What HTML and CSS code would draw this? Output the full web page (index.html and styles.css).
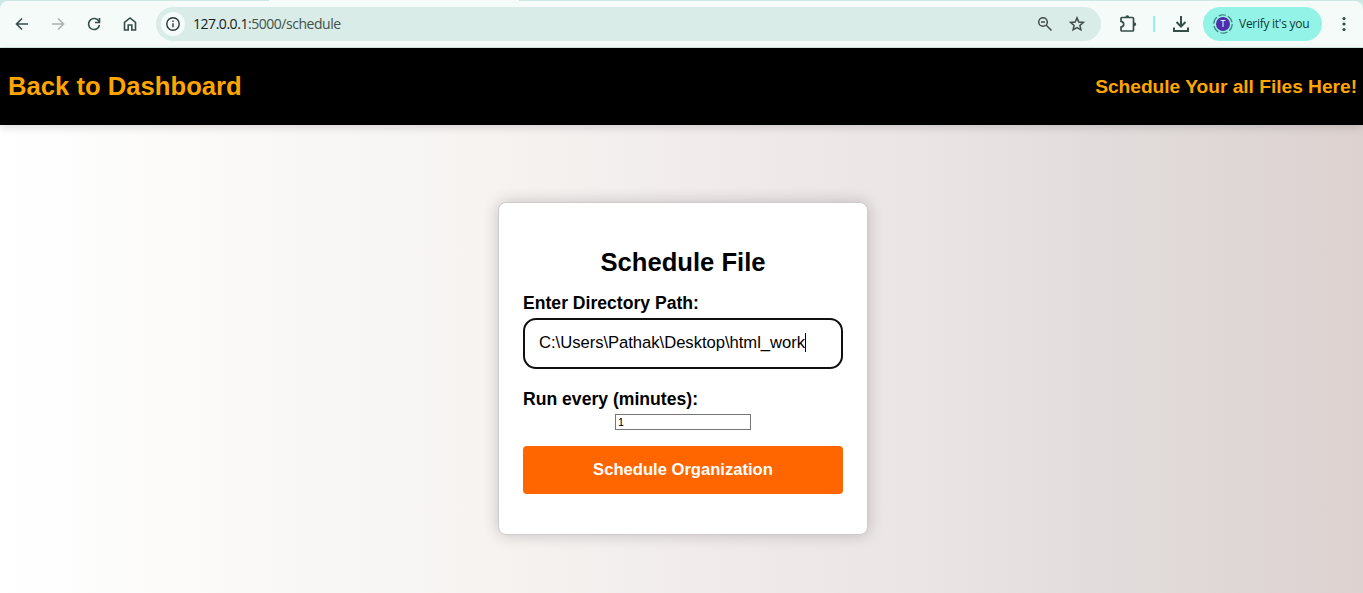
FILE: index.html
```
<!DOCTYPE html>
<html lang="en">
<head>
<meta charset="utf-8">
<title>Schedule File</title>
<link rel="stylesheet" href="styles.css">
</head>
<body>
<div class="browser">
  <div class="tabstrip"><span class="active-tab"></span></div>
  <div class="toolbar">
    <div class="nav">
      <svg viewBox="0 0 16 16"><path d="M14 8H3M8 2.5L2.5 8L8 13.500"/></svg>
      <svg class="muted" viewBox="0 0 16 16"><path d="M2 8H13M8 2.500L13.500 8L8 13.500"/></svg>
      <svg viewBox="0 0 16 16"><path d="M13 5.500A5.500 5.500 0 1 0 13.500 9M13.500 2V6.500H9"/></svg>
      <svg viewBox="0 0 16 16"><path d="M2.500 14V6.500L8 2L13.500 6.500V14H9.800V9H6.200V14Z"/></svg>
    </div>
    <div class="address">
      <span class="info"><svg viewBox="0 0 16 16"><circle cx="8" cy="8" r="6.200"/><path d="M8 7.200V11.200M8 4.600V6"/></svg></span>
      <span class="url"><b>127.0.0.1</b>:5000/schedule</span>
      <svg class="zoom" viewBox="0 0 16 16"><circle cx="6" cy="6" r="4.300"/><path d="M9.300 9.300L14.500 14.500M4 6H8"/></svg>
      <svg class="star" viewBox="0 0 16 16"><path d="M8 1.900L9.800 6L14.300 6.400L10.900 9.400L11.900 13.800L8 11.500L4.100 13.800L5.100 9.400L1.700 6.400L6.200 6Z"/></svg>
    </div>
    <svg class="puzzle" viewBox="0 0 18 18"><path d="M3 2.500H13.500Q14.500 2.500 14.500 3.500V15Q14.500 16 13.500 16H3Q2 16 2 15V12.200Q4.700 11.700 4.700 9.300T2 6.400V3.500Q2 2.500 3 2.500Z"/><path class="solid" d="M6.300 2.500A2 2.300 0 0 1 10.300 2.500ZM14.500 7.200A2.700 2 0 0 1 14.500 11.200Z"/></svg>
    <span class="divider"></span>
    <svg class="download" viewBox="0 0 18 18"><path d="M9 1V11M4.500 7L9 11.500L13.500 7M2 12.500V16H16V12.500"/></svg>
    <div class="profile">
      <span class="avatar"><svg viewBox="0 0 20 20"><circle cx="10" cy="10" r="9.200"/></svg><i>T</i></span>
      <span class="verify">Verify it's you</span>
    </div>
    <svg class="menu" viewBox="0 0 4 16"><circle cx="2" cy="2.500" r="1.600"/><circle cx="2" cy="8" r="1.600"/><circle cx="2" cy="13.500" r="1.600"/></svg>
  </div>
</div>
<header class="header">
  <a class="back">Back to Dashboard</a>
  <span class="tagline">Schedule Your all Files Here!</span>
</header>
<main class="page">
  <form class="card">
    <h1>Schedule File</h1>
    <label>Enter Directory Path:</label>
    <div class="path">C:\Users\Pathak\Desktop\html_work<span class="caret"></span></div>
    <label class="run">Run every (minutes):</label>
    <div class="minutes">1</div>
    <button type="button">Schedule Organization</button>
  </form>
</main>
</body>
</html>
```
FILE: styles.css
```
* { box-sizing: border-box; }
body { margin: 0; height: 593px; overflow: hidden; display: flex; flex-direction: column; font-family: "Liberation Sans", Arial, sans-serif; }
svg { display: block; fill: none; stroke: #344e49; stroke-width: 1.6; flex: none; }

.browser { height: 48px; flex: none; background: #cce8e2; border-bottom: 1px solid #d2e8e3; }
.tabstrip { height: 1px; display: flex; }
.active-tab { width: 250px; margin-left: 269px; background: #f4fbf9; }
.toolbar { height: 46px; display: flex; align-items: center; background: #f4fbf9; border-radius: 8px 8px 0 0; }
.nav { display: flex; gap: 20px; padding-left: 14px; width: 156px; flex: none; }
.nav svg { width: 16px; height: 16px; }
.nav .muted { stroke: #a9b3b0; }
.address { width: 945px; height: 34px; flex: none; display: flex; align-items: center; padding-left: 5px; background: #d9ece7; border-radius: 17px; }
.info { width: 24px; height: 24px; border-radius: 50%; background: #f4fbf9; display: flex; align-items: center; justify-content: center; }
.info svg { width: 16px; height: 16px; stroke: #2c3735; stroke-width: 1.4; }
.url { margin-left: 8px; width: 844px; font: 14px/18px "Open Sans", "Noto Sans", sans-serif; letter-spacing: -.46px; color: #43504d; white-space: nowrap; }
.url b { font-weight: 400; color: #17201e; }
.zoom, .star { width: 16px; height: 16px; stroke: #414c49; stroke-width: 1.5; }
.star { margin-left: 16px; }
.puzzle { width: 18px; height: 18px; margin-left: 18px; stroke-width: 1.7; }
.puzzle .solid { fill: #344e49; stroke: none; }
.divider { width: 2px; height: 16px; margin-left: 16px; background: #93f3e6; }
.download { width: 18px; height: 18px; margin-left: 17px; stroke-width: 2; }
.profile { width: 119px; height: 34px; flex: none; margin-left: 13px; padding-left: 10px; border-radius: 17px; background: #93f3e6; display: flex; align-items: center; }
.avatar { width: 20px; height: 20px; display: grid; place-items: center; }
.avatar > * { grid-area: 1 / 1; }
.avatar svg { width: 20px; height: 20px; stroke: #3c8880; stroke-width: 1.2; stroke-dasharray: 7.500 2.130; }
.avatar i { width: 14px; height: 14px; border-radius: 50%; background: #512da8; color: #fff; font: 9px/14px Roboto, sans-serif; text-align: center; }
.verify { margin-left: 6px; font: 12px/16px "Open Sans", "Noto Sans", sans-serif; letter-spacing: -.27px; color: #123a34; white-space: nowrap; }
.menu { width: 4px; height: 16px; margin-left: 20px; fill: #344e49; stroke: none; }

.header { height: 77px; flex: none; padding: 0 6px 0 8px; display: flex; align-items: center; justify-content: space-between; background: #000; color: #ffa500; font-weight: 700; box-shadow: 0 3px 8px rgba(0, 0, 0, .13); z-index: 1; }
.back { font-size: 25.6px; letter-spacing: .03px; }
.tagline { font-size: 19.2px; letter-spacing: -.03px; }

.page { flex: 1; padding-top: 77px; background: linear-gradient(to right, #fff, #f6f3f1 36%, #ebe5e5 67%, #e1dcdb 82%, #ddd2d0); }
.card { width: 370px; height: 333px; margin-left: 498px; padding: 43px 24px 0; border: 1px solid #ccc; border-radius: 8px; background: #fff; box-shadow: 0 0 16px rgba(0, 0, 0, .2); }
h1 { margin: 0 0 15px; font-size: 25.6px; line-height: 32px; text-align: center; }
label { display: block; font-size: 17.6px; font-weight: 700; line-height: 20px; }
.path { height: 51px; margin-top: 5px; padding: 0 14px 2px; display: flex; align-items: center; border: 2px solid #101010; border-radius: 13px; font-size: 16.64px; letter-spacing: -.03px; white-space: nowrap; }
.caret { width: 1px; height: 19px; background: #000; }
.run { margin-top: 20px; }
.minutes { width: 136px; height: 16px; margin: 5px auto 16px; padding-left: 2px; border: 1px solid #767676; font-size: 10.667px; line-height: 14px; }
button { display: block; width: 320px; height: 48px; padding: 0; border: 0; border-radius: 4px; background: #f60; color: #fff; font: 700 16.6px "Liberation Sans", Arial, sans-serif; }
```
